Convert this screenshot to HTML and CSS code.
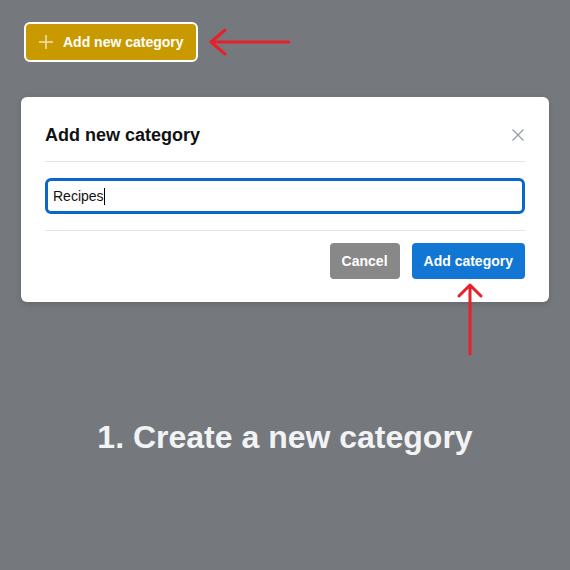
FILE: index.html
```html
<!DOCTYPE html>
<html lang="en">
<head>
    <meta charset="UTF-8">
    <title>Create a new category</title>
    <link rel="stylesheet" href="styles.css">
</head>
<body>
    <div class="toolbar">
        <button class="add-btn">
            <svg width="14" height="14" viewBox="0 0 14 14"><path d="M7 0v14M0 7h14" stroke="#f3e2b0" stroke-width="1.5"/></svg>
            Add new category
        </button>
        <!-- pointer arrow -->
        <svg class="arrow-left" width="84" height="30" viewBox="0 0 84 30">
            <path d="M82 15H4M18 3L4 15l14 12" fill="none" stroke="#e8202a" stroke-width="3" stroke-linecap="round" stroke-linejoin="round"/>
        </svg>
    </div>

    <div class="modal">
        <div class="modal-header">
            <h2>Add new category</h2>
            <svg class="close" width="12" height="12" viewBox="0 0 12 12"><path d="M0.5 0.5l11 11M11.5 0.5l-11 11" stroke="#8d9ca8" stroke-width="1.2"/></svg>
        </div>
        <div class="modal-body">
            <div class="field">Recipes<span class="caret"></span></div>
        </div>
        <div class="modal-footer">
            <button class="btn btn-cancel">Cancel</button>
            <button class="btn btn-primary">Add category</button>
        </div>
        <svg class="arrow-up" width="28" height="74" viewBox="0 0 28 74">
            <path d="M14 72V3M3 14L14 3l11 11" fill="none" stroke="#e8202a" stroke-width="3" stroke-linecap="round" stroke-linejoin="round"/>
        </svg>
    </div>

    <p class="caption">1. Create a new category</p>
</body>
</html>
```

FILE: styles.css
```css
body {
    margin: 0;
    height: 570px;
    background: #75797e;
    font-family: "Liberation Sans", Arial, sans-serif;
    overflow: hidden;
}

.toolbar {
    display: flex;
    align-items: center;
    gap: 9px;
    padding: 22px 0 0 24px;
}

.add-btn {
    display: flex;
    align-items: center;
    gap: 10px;
    height: 40px;
    padding: 0 12px 0 13px;
    background: #c89a00;
    color: #fff;
    border: 2px solid #fff;
    border-radius: 6px;
    font-family: inherit;
    font-size: 14px;
    font-weight: bold;
}

.modal {
    position: relative;
    width: 528px;
    margin: 35px 0 0 21px;
    background: #fff;
    border-radius: 6px;
    box-shadow: 0 2px 6px rgba(0,0,0,0.15);
}

.modal-header {
    display: flex;
    align-items: center;
    justify-content: space-between;
    margin: 0 24px;
    padding: 25px 0 13px;
    border-bottom: 1px solid #e3e3e6;
}

.modal-header h2 {
    margin: 0;
    font-size: 18px;
    line-height: 26px;
    color: #111;
}

.close {
    margin-right: 1px;
}

.modal-body {
    margin: 0 24px;
    padding: 16px 0;
    border-bottom: 1px solid #e3e3e6;
}

.field {
    height: 30px;
    line-height: 30px;
    padding: 0 5px;
    border: 3px solid #0a66c9;
    border-radius: 6px;
    font-size: 14px;
    color: #111;
}

.caret {
    display: inline-block;
    width: 1px;
    height: 17px;
    background: #000;
    vertical-align: -4px;
}

.modal-footer {
    display: flex;
    justify-content: flex-end;
    gap: 12px;
    padding: 12px 24px 23px;
}

.btn {
    height: 36px;
    padding: 0 12px;
    border: none;
    border-radius: 4px;
    color: #fff;
    font-family: inherit;
    font-size: 14px;
    font-weight: bold;
}

.btn-cancel {
    background: #888888;
}

.btn-primary {
    background: #1176d4;
}

.arrow-up {
    position: absolute;
    left: 435px;
    top: 185px;
}

.caption {
    margin: 117px 0 0;
    text-align: center;
    font-size: 32px;
    font-weight: bold;
    color: #f2f3f5;
}
```
